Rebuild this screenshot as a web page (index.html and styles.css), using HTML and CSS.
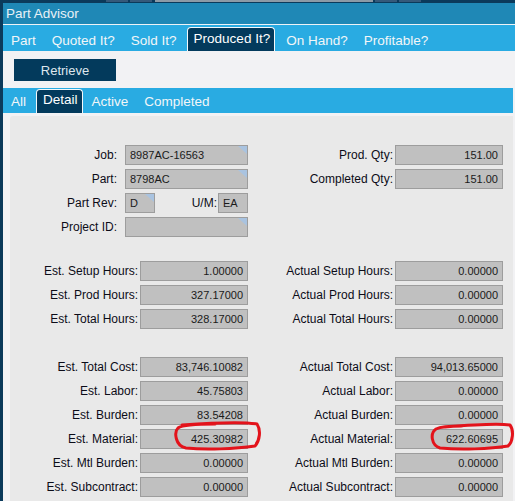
FILE: index.html
```html
<!DOCTYPE html>
<html>
<head>
<meta charset="utf-8">
<title>Part Advisor</title>
<link rel="stylesheet" href="styles.css">
</head>
<body>
<div class="topstrip">
  <span class="seg s1"></span><span class="seg s2"></span><span class="seg s3"></span><span class="seg s4"></span><span class="seg s5"></span>
</div>
<div class="app">
  <div class="titlebar">Part Advisor</div>
  <div class="tabs tabs1">
    <div class="tab">Part</div>
    <div class="tab">Quoted It?</div>
    <div class="tab">Sold It?</div>
    <div class="tab active">Produced It?</div>
    <div class="tab">On Hand?</div>
    <div class="tab">Profitable?</div>
  </div>
  <div class="toolbar">
    <button class="btn">Retrieve</button>
  </div>
  <div class="tabs tabs2">
    <div class="tab">All</div>
    <div class="tab active">Detail</div>
    <div class="tab">Active</div>
    <div class="tab">Completed</div>
  </div>
  <div class="panel">
    <div class="section">
      <div class="col left">
        <div class="row"><span class="label wide">Job:</span><span class="field w123 key">8987AC-16563</span></div>
        <div class="row"><span class="label wide">Part:</span><span class="field w123 key">8798AC</span></div>
        <div class="row"><span class="label wide">Part Rev:</span><span class="field w30 key">D</span><span class="label um">U/M:</span><span class="field w30">EA</span></div>
        <div class="row"><span class="label wide">Project ID:</span><span class="field w123 key"></span></div>
      </div>
      <div class="col right">
        <div class="row"><span class="label">Prod. Qty:</span><span class="field w108 num">151.00</span></div>
        <div class="row"><span class="label">Completed Qty:</span><span class="field w108 num">151.00</span></div>
      </div>
    </div>

    <div class="section hours">
      <div class="col left">
        <div class="row"><span class="label">Est. Setup Hours:</span><span class="field w108 num">1.00000</span></div>
        <div class="row"><span class="label">Est. Prod Hours:</span><span class="field w108 num">327.17000</span></div>
        <div class="row"><span class="label">Est. Total Hours:</span><span class="field w108 num">328.17000</span></div>
      </div>
      <div class="col right">
        <div class="row"><span class="label">Actual Setup Hours:</span><span class="field w108 num">0.00000</span></div>
        <div class="row"><span class="label">Actual Prod Hours:</span><span class="field w108 num">0.00000</span></div>
        <div class="row"><span class="label">Actual Total Hours:</span><span class="field w108 num">0.00000</span></div>
      </div>
    </div>

    <div class="section costs">
      <div class="col left">
        <div class="row"><span class="label">Est. Total Cost:</span><span class="field w108 num">83,746.10082</span></div>
        <div class="row"><span class="label">Est. Labor:</span><span class="field w108 num">45.75803</span></div>
        <div class="row"><span class="label">Est. Burden:</span><span class="field w108 num">83.54208</span></div>
        <div class="row"><span class="label">Est. Material:</span><span class="field w108 num">425.30982</span></div>
        <div class="row"><span class="label">Est. Mtl Burden:</span><span class="field w108 num">0.00000</span></div>
        <div class="row"><span class="label">Est. Subcontract:</span><span class="field w108 num">0.00000</span></div>
      </div>
      <div class="col right">
        <div class="row"><span class="label">Actual Total Cost:</span><span class="field w108 num">94,013.65000</span></div>
        <div class="row"><span class="label">Actual Labor:</span><span class="field w108 num">0.00000</span></div>
        <div class="row"><span class="label">Actual Burden:</span><span class="field w108 num">0.00000</span></div>
        <div class="row"><span class="label">Actual Material:</span><span class="field w108 num">622.60695</span></div>
        <div class="row"><span class="label">Actual Mtl Burden:</span><span class="field w108 num">0.00000</span></div>
        <div class="row"><span class="label">Actual Subcontract:</span><span class="field w108 num">0.00000</span></div>
      </div>
    </div>
  </div>
</div>
<svg class="marks" viewBox="0 0 515 501" width="515" height="501">
  <path d="M 182 425 C 210 423, 240 421, 257 424 C 261 430, 260 440, 255 446 C 235 449, 205 450, 186 448 C 175 446, 174 432, 178 428 C 182 425, 200 424, 215 424"/>
  <path d="M 445 427 C 470 425, 495 423, 510 425 C 514 430, 513 442, 508 446 C 490 449, 460 450, 440 448 C 431 445, 430 433, 436 429 C 440 427, 450 426, 462 426"/>
</svg>
</body>
</html>
```

FILE: styles.css
```css
html, body {
  margin: 0;
  padding: 0;
}
body {
  width: 515px;
  height: 501px;
  overflow: hidden;
  background: #0b3a5b;
  font-family: "Liberation Sans", Arial, sans-serif;
  position: relative;
}
.topstrip {
  height: 3px;
  display: flex;
  align-items: flex-start;
  padding-left: 106px;
}
.seg {
  height: 2px;
  display: block;
}
.s1 { width: 22px; background: #35597a; margin-right: 2px; }
.s2 { width: 22px; background: #35597a; margin-right: 3px; }
.s3 { width: 218px; background: #8c9aa6; margin-right: 2px; }
.s4 { width: 22px; background: #35597a; margin-right: 2px; }
.s5 { width: 22px; background: #35597a; }

.app {
  margin-left: 3px;
  height: 498px;
  background: #f2f2f4;
  display: flex;
  flex-direction: column;
}
.titlebar {
  height: 21px;
  background: #1f88b6;
  color: #e8f1f6;
  font-size: 13.5px;
  line-height: 21px;
  padding-left: 3px;
  border-bottom: 1px solid #eef3f6;
  flex: none;
}
.tabs {
  display: flex;
  background: #29abe2;
  flex: none;
}
.tabs1 {
  height: 26px;
}
.tabs2 {
  height: 25px;
  margin-right: 2px;
}
.tab {
  color: #f2f6f8;
  font-size: 13.5px;
  line-height: 15px;
  padding: 8px 8px 0;
  box-sizing: border-box;
  white-space: nowrap;
}
.tabs2 .tab {
  padding-top: 6px;
}
.tab.active {
  background: #033a5c;
  color: #ffffff;
  border: 1px solid #f4f8fa;
  border-bottom: none;
  border-radius: 4px 4px 0 0;
  padding: 3px 4px 0 6px;
  margin: 2px 3px 0 2px;
}
.tabs2 .tab.active {
  margin: 1px 1px 0 2px;
  padding-top: 2px;
}
.toolbar {
  height: 37px;
  box-sizing: border-box;
  padding: 8px 0 0 11px;
  flex: none;
}
.btn {
  display: block;
  width: 102px;
  height: 22px;
  border: none;
  margin: 0;
  padding: 0;
  background: #033a5c;
  color: #dfe7ee;
  font-family: "Liberation Sans", Arial, sans-serif;
  font-size: 13px;
}
.panel {
  margin: 3px 2px 0 7px;
  background: #e9e9e9;
  border-top-left-radius: 3px;
  flex: 1;
  padding: 29px 10px 0 0;
}
.section {
  display: flex;
}
.section.hours {
  margin-top: 24px;
}
.section.costs {
  margin-top: 28px;
}
.col {
  display: flex;
  flex-direction: column;
  gap: 4px;
}
.col.left {
  width: 238px;
}
.col.right {
  flex: 1;
}
.row {
  display: flex;
  align-items: center;
  height: 20px;
}
.label {
  flex: 1;
  text-align: right;
  font-size: 12px;
  color: #0c0c18;
  margin-right: 2px;
  white-space: nowrap;
}
.label.wide {
  flex: none;
  width: 107px;
  margin-right: 8px;
}
.label.um {
  margin-right: 1px;
}
.field {
  position: relative;
  height: 20px;
  box-sizing: border-box;
  border: 1px solid #9d9d9d;
  background: #c0c0c0;
  font-size: 11px;
  line-height: 19px;
  color: #1a1a1a;
  padding: 0 4px;
  white-space: nowrap;
  overflow: hidden;
}
.field.num {
  text-align: right;
}
.field.key::after {
  content: "";
  position: absolute;
  top: 0;
  right: 0;
  width: 9px;
  height: 8px;
  background: #a9c3e0;
  clip-path: polygon(0 0, 100% 0, 100% 100%);
}
.w123 { width: 123px; }
.w108 { width: 108px; }
.w30 { width: 30px; }

.marks {
  position: absolute;
  left: 0;
  top: 0;
  pointer-events: none;
}
.marks path {
  fill: none;
  stroke: #e3131b;
  stroke-width: 3;
  stroke-linecap: round;
  stroke-linejoin: round;
}
```
